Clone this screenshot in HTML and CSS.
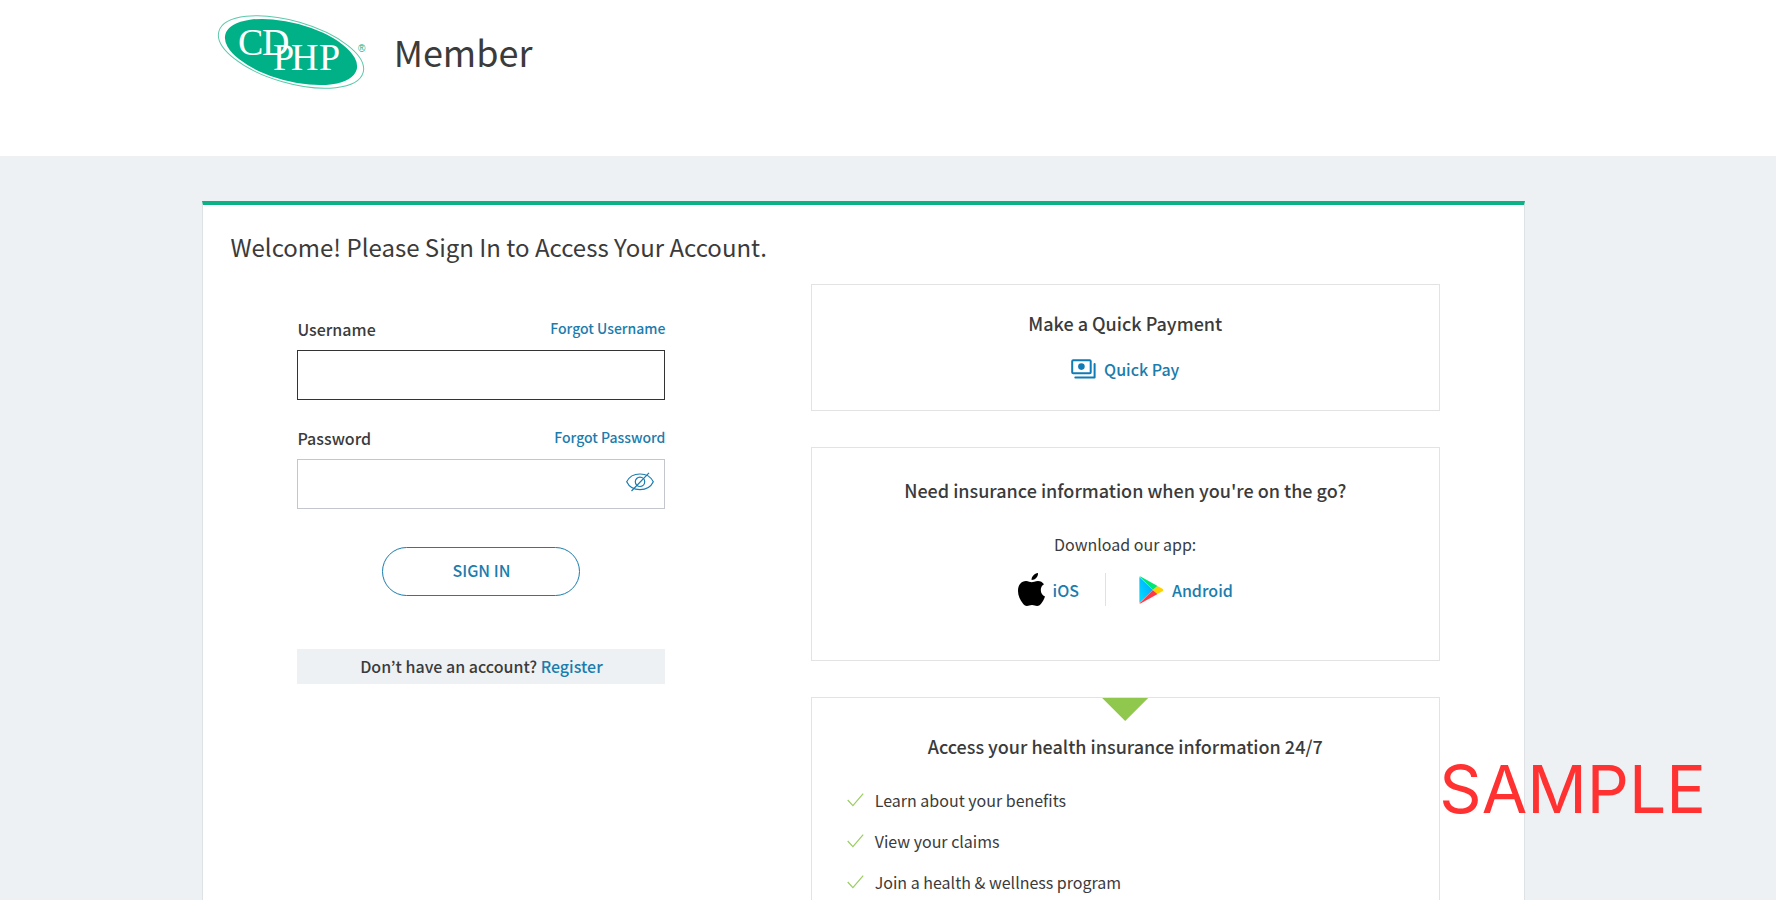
FILE: index.html
```html
<!DOCTYPE html>
<html lang="en">
<head>
<meta charset="utf-8">
<meta name="viewport" content="width=device-width, initial-scale=1">
<title>CDPHP Member</title>
<link rel="stylesheet" href="styles.css">
</head>
<body>
<header class="site-header">
  <svg class="logo" viewBox="0 0 150 76" role="img" aria-label="CDPHP">
    <ellipse class="logo-ring" cx="74" cy="38" rx="75" ry="31" transform="rotate(16 74 38)"/>
    <ellipse class="logo-fill" cx="74" cy="38" rx="68" ry="29" transform="rotate(15 74 38)"/>
    <g class="logo-letters">
      <text x="21" y="41">C</text><text x="45" y="41">D</text>
      <text x="56" y="56">P</text><text x="74" y="56">H</text><text x="102" y="56">P</text>
    </g>
    <text class="logo-mark" x="141" y="38">®</text>
  </svg>
  <span class="site-name">Member</span>
</header>
<main class="page">
  <section class="panel">
    <h1 class="welcome">Welcome! Please Sign In to Access Your Account.</h1>
    <div class="columns">
      <form class="sign-in">
        <div class="field">
          <div class="field-head">
            <label for="username">Username</label>
            <a href="#forgot-username">Forgot Username</a>
          </div>
          <input class="text-box is-active" id="username" type="text">
        </div>
        <div class="field">
          <div class="field-head">
            <label for="password">Password</label>
            <a href="#forgot-password">Forgot Password</a>
          </div>
          <div class="password-wrap">
            <input class="text-box" id="password" type="password">
            <button class="reveal" type="button" aria-label="Show password">
              <svg viewBox="0 0 28 20" width="28" height="20"><path d="M.7 9.800C3 5 8 2 14 2s11 3 13.300 7.800C25 14.700 20 17.700 14 17.700S3 14.700.7 9.800z"/><circle cx="14" cy="9.800" r="4.700"/><path d="M5.500 19 23 .8"/></svg>
            </button>
          </div>
        </div>
        <button class="submit" type="submit">SIGN IN</button>
        <p class="register">Don’t have an account? <a href="#register">Register</a></p>
      </form>
      <div class="cards">
        <section class="card card-pay">
          <h2>Make a Quick Payment</h2>
          <a class="icon-link" href="#quick-pay">
            <svg viewBox="0 0 25 20" width="25" height="20"><g fill="none" stroke="#0f7cb5" stroke-width="2" stroke-linejoin="round" stroke-linecap="round"><rect x="1.200" y="1.200" width="18.500" height="13" rx="1"/><path d="M4.300 18.400h19.300V5"/></g><circle cx="10.400" cy="7.600" r="3.300" fill="#0f7cb5"/></svg>
            Quick Pay</a>
        </section>
        <section class="card card-apps">
          <h2>Need insurance information when you're on the go?</h2>
          <p>Download our app:</p>
          <div class="stores">
            <a class="icon-link" href="#ios">
              <svg viewBox="0 0 27 33" width="27" height="33"><path d="M20 0c.4 3.600-2.600 7-6.400 7C13.300 3.500 16.400.6 20 0zM26 11.300c-2 1.200-3.200 3.100-3.200 5.700 0 3 1.700 5.400 4.200 6.500-.9 2.800-2.300 5.300-4.100 7.500-1.100 1.300-2.200 2-3.800 2-1.900 0-2.900-1-5.100-1s-3.300 1-5.100 1c-1.700 0-3-1-4-2.400C2.200 27.200 0 22.800 0 18 0 11.700 3.400 8 8 8c2.400 0 4.200 1.300 5.700 1.300S17.200 8 20 8c2.400 0 4.600 1.200 6 3.300z"/></svg>
              iOS</a>
            <span class="divider"></span>
            <a class="icon-link" href="#android">
              <svg viewBox="0 0 25 28" width="25" height="28"><defs><linearGradient id="sky" x1="1" y1="0" x2="0" y2="1"><stop offset="0" stop-color="#00a0ff"/><stop offset="1" stop-color="#00e2ff"/></linearGradient></defs><path fill="url(#sky)" d="M.4 1 14 14 .4 27z"/><path fill="#00e676" d="M.4.600Q1 .2 2 .7L18.600 10 14 14z"/><path fill="#ff3a44" d="M.4 27.400Q1 27.800 2 27.300L18.600 18 14 14z"/><path fill="#ffd000" d="m18.400 9.900 5.500 3.100q1 1 0 2l-5.500 3.100L14 14z"/></svg>
              Android</a>
          </div>
        </section>
        <section class="card card-access">
          <h2>Access your health insurance information 24/7</h2>
          <ul class="benefits">
            <li><svg viewBox="0 0 17 14" width="17" height="14"><path d="m.7 7 5.200 5.700L16.200.7"/></svg>Learn about your benefits</li>
            <li><svg viewBox="0 0 17 14" width="17" height="14"><path d="m.7 7 5.200 5.700L16.200.7"/></svg>View your claims</li>
            <li><svg viewBox="0 0 17 14" width="17" height="14"><path d="m.7 7 5.200 5.700L16.200.7"/></svg>Join a health &amp; wellness program</li>
          </ul>
        </section>
      </div>
    </div>
  </section>
</main>
<div class="watermark">SAMPLE</div>
</body>
</html>
```
FILE: styles.css
```css
* {
  box-sizing: border-box;
}

body {
  margin: 0;
  background: #edf1f4;
  color: #3b3b3b;
  font: 400 16px/24px "Noto Sans CJK KR", "Noto Sans", sans-serif;
}

h1, h2, p, ul {
  margin: 0;
  padding: 0;
}

a {
  color: #1b7cad;
  font-weight: 500;
  text-decoration: none;
}

.site-header {
  display: flex;
  align-items: flex-start;
  gap: 27px;
  height: 156px;
  padding: 14px 14.1% 0 12.2%;
  background: #fff;
}

.logo {
  width: 150px;
  height: 76px;
  overflow: visible;
}

.logo-ring {
  fill: #fff;
  stroke: #5cc9aa;
  stroke-width: 1;
}

.logo-fill {
  fill: #00b187;
}

.logo-letters {
  fill: #fff;
  font: 38px "Liberation Serif", serif;
}

.logo-mark {
  fill: #00b187;
  font: 10px "Liberation Sans", sans-serif;
}

.site-name {
  padding-top: 12px;
  font-size: 36px;
  line-height: 50px;
}

.page {
  display: flow-root;
  height: calc(100vh - 156px);
  min-height: 744px;
  padding: 45px 14.15% 0 11.4%;
  overflow: hidden;
}

.panel {
  padding: 24px 84px 0 27px;
  border: 1px solid #dfe2e5;
  border-top: 4px solid #0cb286;
  background: #fff;
}

.welcome {
  font-size: 24px;
  font-weight: 400;
  line-height: 36px;
}

.columns {
  display: flex;
  justify-content: space-between;
  padding-top: 19px;
}

.sign-in {
  flex: 0 1 368px;
  margin: 32px 40px 0 67px;
}

.field {
  padding-bottom: 25px;
}

.field-head {
  display: flex;
  justify-content: space-between;
  padding-bottom: 8px;
  line-height: 26px;
}

.field-head label {
  font-weight: 500;
}

.field-head a {
  font-size: 14px;
  line-height: 24px;
}

.text-box {
  display: block;
  width: 100%;
  height: 50px;
  padding: 0 12px;
  border: 1px solid #c3c6cc;
  border-radius: 0;
  background: #fff;
  color: inherit;
  font: inherit;
}

.text-box.is-active {
  border-color: #333;
}

.password-wrap {
  position: relative;
}

.reveal {
  position: absolute;
  top: 13px;
  right: 11px;
  padding: 0;
  border: 0;
  background: none;
}

.reveal svg {
  display: block;
  fill: none;
  stroke: #1b7cad;
  stroke-width: 1.2;
}

.submit {
  display: block;
  width: 198px;
  height: 49px;
  margin: 13px auto 53px;
  padding: 0 0 3px;
  border: 1px solid #1b7cad;
  border-radius: 25px;
  background: #fff;
  color: #1b7cad;
  font: inherit;
  font-weight: 500;
}

.register {
  background: #edf1f4;
  font-weight: 500;
  line-height: 35px;
  text-align: center;
}

.cards {
  display: flex;
  flex: 0 1 629px;
  flex-direction: column;
  gap: 36px;
}

.card {
  border: 1px solid #e2e3e5;
  text-align: center;
}

.card h2 {
  font-size: 18px;
  font-weight: 500;
  line-height: 26px;
}

.card-pay {
  display: flex;
  flex-direction: column;
  align-items: center;
  gap: 21px;
  padding: 25px 0 29px;
}

.icon-link {
  display: inline-flex;
  align-items: center;
  gap: 8px;
}

.card-apps {
  padding: 29px 0 54px;
}

.card-apps p {
  padding-top: 29px;
}

.stores {
  display: flex;
  justify-content: center;
  padding-top: 17px;
}

.divider {
  width: 1px;
  margin: 0 33px 0 26px;
  background: #e0e1e3;
}

.card-access {
  padding: 0 35px 40px;
}

.card-access::before {
  content: "";
  display: block;
  width: 46px;
  height: 23px;
  margin: 0 auto 12px;
  background: #8fc84c;
  clip-path: polygon(0 0, 100% 0, 50% 100%);
}

.benefits {
  display: grid;
  gap: 17px;
  padding-top: 29px;
  list-style: none;
}

.benefits li {
  display: flex;
  align-items: center;
  gap: 11px;
}

.benefits svg {
  fill: none;
  stroke: #9acd61;
  stroke-width: 1.2;
}

.watermark {
  position: fixed;
  right: 70px;
  bottom: 71px;
  color: #ff3131;
  font: 400 66px/80px Inter, sans-serif;
}
```
